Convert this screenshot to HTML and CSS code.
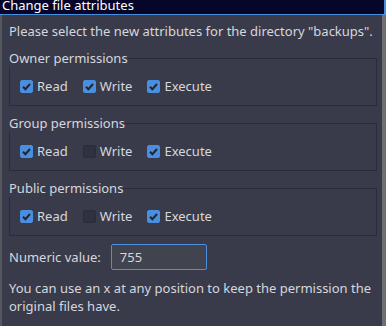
FILE: index.html
```html
<!DOCTYPE html>
<html lang="en">
<head>
    <meta charset="UTF-8">
    <meta name="viewport" content="width=device-width, initial-scale=1.0">
    <title>Change file attributes</title>
    <link rel="stylesheet" href="styles.css">
</head>
<body>
    <div class="titlebar">
        <span class="title">Change file attributes</span>
    </div>
    <div class="window">
        <p class="intro">Please select the new attributes for the directory "backups".</p>

        <fieldset class="perm">
            <legend>Owner permissions</legend>
            <div class="row">
                <label class="check"><span class="box on"><svg viewBox="0 0 13 13"><path d="M3 6.8 L5.4 9.2 L10 4"/></svg></span>Read</label>
                <label class="check"><span class="box on"><svg viewBox="0 0 13 13"><path d="M3 6.8 L5.4 9.2 L10 4"/></svg></span>Write</label>
                <label class="check"><span class="box on"><svg viewBox="0 0 13 13"><path d="M3 6.8 L5.4 9.2 L10 4"/></svg></span>Execute</label>
            </div>
        </fieldset>

        <fieldset class="perm">
            <legend>Group permissions</legend>
            <div class="row">
                <label class="check"><span class="box on"><svg viewBox="0 0 13 13"><path d="M3 6.8 L5.4 9.2 L10 4"/></svg></span>Read</label>
                <label class="check"><span class="box"></span>Write</label>
                <label class="check"><span class="box on"><svg viewBox="0 0 13 13"><path d="M3 6.8 L5.4 9.2 L10 4"/></svg></span>Execute</label>
            </div>
        </fieldset>

        <fieldset class="perm">
            <legend>Public permissions</legend>
            <div class="row">
                <label class="check"><span class="box on"><svg viewBox="0 0 13 13"><path d="M3 6.8 L5.4 9.2 L10 4"/></svg></span>Read</label>
                <label class="check"><span class="box"></span>Write</label>
                <label class="check"><span class="box on"><svg viewBox="0 0 13 13"><path d="M3 6.8 L5.4 9.2 L10 4"/></svg></span>Execute</label>
            </div>
        </fieldset>

        <div class="numeric">
            <span>Numeric value:</span>
            <input type="text" value="755">
        </div>

        <p class="note">You can use an x at any position to keep the permission the original files have.</p>
    </div>
</body>
</html>
```

FILE: styles.css
```css
body {
    margin: 0;
    background-color: #393b4b;
    font-family: "Noto Sans", "DejaVu Sans", sans-serif;
    font-size: 13px;
    line-height: 18px;
    color: #d6d7dd;
    height: 326px;
    display: flex;
    flex-direction: column;
    overflow: hidden;
}

.titlebar {
    height: 14px;
    background-color: #06062b;
    border-bottom: 1px solid #4a8fdc;
    border-right: 2px solid #4a8fdc;
    padding-left: 2px;
    overflow: hidden;
}

.title {
    display: block;
    margin-top: -4px;
    line-height: 18px;
    color: #ffffff;
}

.window {
    flex: 1;
    border-left: 2px solid #55575f;
    border-right: 4px solid #6e6f73;
    padding: 7px 5px 0 7px;
}

.intro {
    margin: 0 0 9px 0;
}

.perm {
    margin: 0 0 8px 0;
    padding: 10px 10px 10px 10px;
    border: 1px solid #2a2c3a;
    min-width: 0;
}

.perm legend {
    padding: 0;
    margin-left: -11px;
}

.row {
    display: flex;
    gap: 15px;
}

.check {
    display: flex;
    align-items: center;
    gap: 4px;
}

.box {
    width: 13px;
    height: 13px;
    box-sizing: border-box;
    border-radius: 2px;
    background-color: #2f3140;
    border: 1px solid #2a2c39;
}

.box.on {
    background-color: #4a8fdf;
    border-color: #4a8fdf;
}

.box svg {
    display: block;
    width: 13px;
    height: 13px;
    margin: -1px;
    fill: none;
    stroke: #23252f;
    stroke-width: 2;
}

.numeric {
    display: flex;
    align-items: center;
    gap: 10px;
}

.numeric input {
    width: 96px;
    height: 26px;
    box-sizing: border-box;
    margin: 0;
    padding: 0 8px;
    border: 1px solid #4a8fdf;
    border-radius: 2px;
    background-color: #41434f;
    color: #d6d7dd;
    font-family: inherit;
    font-size: 13px;
    outline: none;
}

.note {
    margin: 9px 0 0 0;
}
```
